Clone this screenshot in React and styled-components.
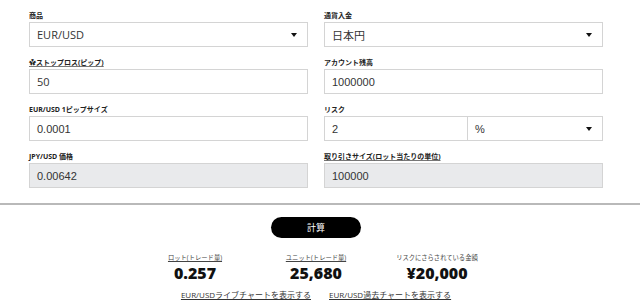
import React from "react";
import styled, { createGlobalStyle } from "styled-components";

const Global = createGlobalStyle`
  html, body { margin: 0; padding: 0; background: #fff; }
  body { font-family: "Open Sans", "Noto Sans CJK JP", sans-serif; color: #222; }
  * { box-sizing: border-box; }
`;

const Page = styled.div`
  width: 640px;
  height: 306px;
  overflow: hidden;
  padding-top: 10px;
`;

const Form = styled.div`
  width: 574px;
  margin-left: 29px;
  display: grid;
  grid-template-columns: 279px 279px;
  column-gap: 16px;
  row-gap: 10px;
`;

const Field = styled.div`
  display: flex;
  flex-direction: column;
`;

const Label = styled.div`
  height: 12px;
  line-height: 12px;
  font-size: 7px;
  font-weight: 700;
  color: #222;
  white-space: nowrap;
  span {
    text-decoration: ${(p) => (p.$underline ? "underline" : "none")};
    text-decoration-color: #777;
    text-underline-offset: 1px;
  }
`;

const Box = styled.div`
  height: 25px;
  border: 1px solid #d4d4d4;
  background: ${(p) => (p.$disabled ? "#e9eaec" : "#fff")};
  display: flex;
  align-items: center;
  padding: 0 10px 0 7px;
  font-family: ${(p) => (p.$open ? '"Open Sans", "Noto Sans CJK JP", sans-serif' : '"Liberation Sans", "Noto Sans CJK JP", sans-serif')};
  font-size: 11px;
  color: #333;
  flex: ${(p) => p.$grow || "1 1 auto"};
`;

const Value = styled.span`
  flex: 1;
`;

const Caret = styled.span`
  width: 0;
  height: 0;
  border-left: 3px solid transparent;
  border-right: 3px solid transparent;
  border-top: 4px solid #111;
`;

const Split = styled.div`
  display: flex;
  > * + * { border-left: none; }
`;

const Divider = styled.div`
  margin-top: 15px;
  height: 2px;
  background: #b9b9b9;
`;

const Bottom = styled.div`
  width: 574px;
  margin-left: 29px;
  display: flex;
  flex-direction: column;
  align-items: center;
`;

const CalcButton = styled.button`
  margin-top: 12px;
  width: 90px;
  height: 21px;
  border-radius: 11px;
  border: none;
  background: #000;
  color: #fff;
  font-family: "Noto Sans CJK JP", sans-serif;
  font-size: 9px;
  padding: 0;
`;

const Results = styled.div`
  margin-top: 15px;
  display: grid;
  grid-template-columns: repeat(3, 121px);
  justify-items: center;
`;

const Result = styled.div`
  display: flex;
  flex-direction: column;
  align-items: center;
`;

const ResultLabel = styled.div`
  font-size: 6.3px;
  line-height: 10px;
  color: #444;
  white-space: nowrap;
  text-decoration: ${(p) => (p.$underline ? "underline" : "none")};
  text-underline-offset: 1px;
`;

const ResultValue = styled.div`
  font-size: 16px;
  font-weight: 800;
  line-height: 20px;
  color: #111;
  white-space: nowrap;
`;

const Links = styled.div`
  margin-top: 6px;
  display: flex;
  gap: 18px;
`;

const Link = styled.a`
  font-size: 8px;
  color: #333;
  text-decoration: underline;
  text-underline-offset: 1px;
  white-space: nowrap;
`;

export default function App() {
  return (
    <Page>
      <Global />
      <Form>
        <Field>
          <Label>商品</Label>
          <Box $open>
            <Value>EUR/USD</Value>
            <Caret />
          </Box>
        </Field>
        <Field>
          <Label>通貨入金</Label>
          <Box>
            <Value>日本円</Value>
            <Caret />
          </Box>
        </Field>
        <Field>
          <Label $underline><span>✿ストップロス(ピップ)</span></Label>
          <Box $open>
            <Value>50</Value>
          </Box>
        </Field>
        <Field>
          <Label>アカウント残高</Label>
          <Box>
            <Value>1000000</Value>
          </Box>
        </Field>
        <Field>
          <Label>EUR/USD 1ピップサイズ</Label>
          <Box>
            <Value>0.0001</Value>
          </Box>
        </Field>
        <Field>
          <Label>リスク</Label>
          <Split>
            <Box $grow="0 0 144px">
              <Value>2</Value>
            </Box>
            <Box>
              <Value>%</Value>
              <Caret />
            </Box>
          </Split>
        </Field>
        <Field>
          <Label>JPY/USD 価格</Label>
          <Box $disabled>
            <Value>0.00642</Value>
          </Box>
        </Field>
        <Field>
          <Label $underline><span>取り引きサイズ(ロット当たりの単位)</span></Label>
          <Box $disabled>
            <Value>100000</Value>
          </Box>
        </Field>
      </Form>
      <Divider />
      <Bottom>
        <CalcButton>計算</CalcButton>
        <Results>
          <Result>
            <ResultLabel $underline>ロット(トレード量)</ResultLabel>
            <ResultValue>0.257</ResultValue>
          </Result>
          <Result>
            <ResultLabel $underline>ユニット(トレード量)</ResultLabel>
            <ResultValue>25,680</ResultValue>
          </Result>
          <Result>
            <ResultLabel>リスクにさらされている金額</ResultLabel>
            <ResultValue>¥20,000</ResultValue>
          </Result>
        </Results>
        <Links>
          <Link>EUR/USDライブチャートを表示する</Link>
          <Link>EUR/USD過去チャートを表示する</Link>
        </Links>
      </Bottom>
    </Page>
  );
}
